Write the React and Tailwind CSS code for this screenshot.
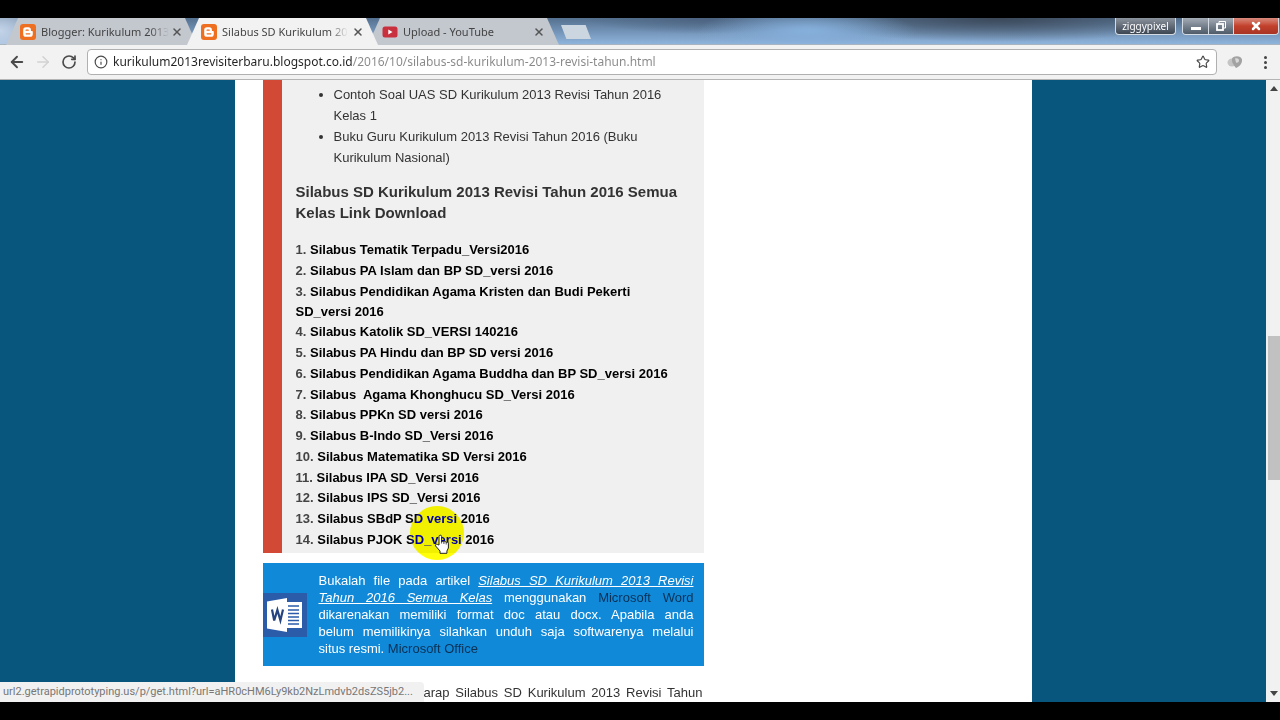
import React, { useState } from 'react'
import { ArrowLeft, ArrowRight, RotateCw, Info, Star, X } from 'lucide-react'

const tabs = [
  { id: 1, title: 'Blogger: Kurikulum 2013', icon: 'blogger' },
  { id: 2, title: 'Silabus SD Kurikulum 20', icon: 'blogger' },
  { id: 3, title: 'Upload - YouTube', icon: 'youtube' },
]

const downloads = [
  'Silabus Tematik Terpadu_Versi2016',
  'Silabus PA Islam dan BP SD_versi 2016',
  'Silabus Pendidikan Agama Kristen dan Budi Pekerti SD_versi\u00a02016',
  'Silabus Katolik SD_VERSI 140216',
  'Silabus PA Hindu dan BP SD versi 2016',
  'Silabus Pendidikan Agama Buddha dan BP SD_versi 2016',
  'Silabus\u00a0 Agama Khonghucu SD_Versi 2016',
  'Silabus PPKn SD versi 2016',
  'Silabus B-Indo SD_Versi 2016',
  'Silabus Matematika SD Versi 2016',
  'Silabus IPA SD_Versi 2016',
  'Silabus IPS SD_Versi 2016',
  'Silabus SBdP SD versi 2016',
  'Silabus PJOK SD_versi 2016',
]

const BloggerIcon = () => (
  <svg viewBox="0 0 16 16" className="h-4 w-4 shrink-0">
    <rect width="16" height="16" rx="3" fill="#ee6f20" />
    <path
      d="M6 3.2h2.4a2.5 2.5 0 0 1 2.5 2.5v.7c0 .5.3.7.8.7.7 0 1.1.3 1.1 1v1.8a2.9 2.9 0 0 1-2.9 2.9H6a2.8 2.8 0 0 1-2.8-2.9V6A2.8 2.8 0 0 1 6 3.2z"
      fill="#fff"
    />
    <path d="M6.1 6.2h2.1M6.1 9.8h3.7" stroke="#ee6f20" strokeWidth="1.3" strokeLinecap="round" />
  </svg>
)

const YoutubeIcon = () => (
  <svg viewBox="0 0 16 16" className="h-4 w-4 shrink-0">
    <rect x="0.5" y="2.5" width="15" height="11" rx="2.5" fill="#c9303e" />
    <path d="M6.3 5.6v4.8l4.2-2.4z" fill="#fff" />
  </svg>
)

const WordIcon = () => (
  <svg viewBox="0 0 44 44" className="h-11 w-11 shrink-0">
    <rect width="44" height="44" fill="#2a5caa" />
    <rect x="23" y="9" width="16" height="26" fill="#fff" />
    <path d="M25 13h11M25 17h11M25 20.500h11M25 24h11M25 27.500h11M25 31h11" stroke="#2a5caa" strokeWidth="1.5" />
    <path d="M4 8.500L24 5v34L4 35.500z" fill="#fff" />
    <path d="M9 16.500l2.200 11 3.200-10.500L17.400 27.500 20 16.500" fill="none" stroke="#24437f" strokeWidth="2.200" />
  </svg>
)

const HandCursor = () => (
  <svg viewBox="0 0 16 20" className="absolute top-7 left-6 h-5 w-4">
    <path
      d="M5 11V2.500a1.300 1.300 0 0 1 2.600 0V8a1.200 1.200 0 0 1 2.300.3 1.200 1.200 0 0 1 2.300.4 1.200 1.200 0 0 1 2.200.7V14l-1.500 3v2.300H6V17L1.600 12c-.8-1.200.7-2.400 1.800-1.500z"
      fill="#fff"
      stroke="#222"
      strokeWidth="1"
    />
    <path d="M7.600 8v1.500M9.900 8.500v1.500M12.200 9v1.500" stroke="#222" strokeWidth="0.8" />
  </svg>
)

const Tab = ({ tab, active, onSelect }) => (
  <div
    className={`relative -mr-2.5 flex h-[27px] w-[191px] items-center px-3.5 pt-px [clip-path:polygon(12px_0,calc(100%-12px)_0,100%_100%,0_100%)] ${
      active ? 'z-10 bg-[#f2f2f2]' : 'bg-[#c3c7ce]'
    }`}
  >
    <button
      onClick={() => onSelect(tab.id)}
      className="flex min-w-0 flex-1 items-center gap-[5px] text-left text-[11px] text-[#444]"
    >
      {tab.icon === 'youtube' ? <YoutubeIcon /> : <BloggerIcon />}
      <span className="flex-1 whitespace-nowrap [mask-image:linear-gradient(to_right,black_85%,transparent)]">
        {tab.title}
      </span>
    </button>
    <button aria-label={`Close ${tab.title}`} className="ml-2 text-[#555]">
      <X className="h-3 w-3" strokeWidth={3} />
    </button>
  </div>
)

const TabStrip = () => {
  const [activeTab, setActiveTab] = useState(2)

  return (
    <div className="flex h-[27px] items-start border-b border-[#a8b4c0] bg-[radial-gradient(ellipse_110px_22px_at_63%_50%,#86b0dc,transparent),radial-gradient(ellipse_200px_24px_at_78%_0%,#3b4859,transparent),radial-gradient(ellipse_120px_16px_at_55%_0%,#4c6380,transparent),radial-gradient(ellipse_60px_40px_at_0%_50%,#c4d4e8,transparent),linear-gradient(to_bottom,#54708f,#8fb4dc)]">
      <div className="flex h-full flex-1 pl-1.5">
        {tabs.map((tab) => (
          <Tab key={tab.id} tab={tab} active={tab.id === activeTab} onSelect={setActiveTab} />
        ))}
        <button
          aria-label="New tab"
          className="mt-[7px] ml-3 h-3.5 w-[30px] bg-[#ccd6e0] [clip-path:polygon(0_0,82%_0,100%_100%,18%_100%)]"
        />
      </div>
      <div className="flex gap-1.5 pr-px">
        <button className="h-[17px] w-[61px] rounded-b border border-t-0 border-[#d5dbe2] bg-linear-to-b from-[#8b939d] to-[#3d4754] text-[10px] leading-4 text-white">
          ziggypixel
        </button>
        <div className="flex h-[17px] overflow-hidden rounded-b border border-t-0 border-[#d5dbe2]">
          <button
            aria-label="Minimize"
            className="flex w-[26px] items-center justify-center border-r border-[#d5dbe2] bg-linear-to-b from-[#a3abb5] to-[#4f5b69]"
          >
            <span className="mt-1 h-[3px] w-2.5 bg-white" />
          </button>
          <button
            aria-label="Restore"
            className="flex w-[25px] items-center justify-center border-r border-[#d5dbe2] bg-linear-to-b from-[#a3abb5] to-[#4f5b69]"
          >
            <svg viewBox="0 0 10 10" className="h-2.5 w-2.5" fill="none" stroke="#fff">
              <path d="M3 2V.5h6.500V7H8" />
              <rect x="1" y="3" width="6" height="6" strokeWidth="1.800" />
            </svg>
          </button>
          <button
            aria-label="Close"
            className="flex w-11 items-center justify-center bg-linear-to-b from-[#d98a7c] via-[#c2402b] to-[#a83424] text-white"
          >
            <X className="h-3 w-3" strokeWidth={5} />
          </button>
        </div>
      </div>
    </div>
  )
}

const Toolbar = () => {
  const [url, setUrl] = useState(
    'kurikulum2013revisiterbaru.blogspot.co.id/2016/10/silabus-sd-kurikulum-2013-revisi-tahun.html'
  )

  return (
    <div className="flex h-[35px] items-center border-b border-[#b4b4b4] bg-[#f2f2f2] pr-[11px] pl-2 text-[#4a4a4a]">
      <button aria-label="Back">
        <ArrowLeft className="h-[18px] w-[18px]" strokeWidth={2.5} />
      </button>
      <button aria-label="Forward" className="ml-2 text-[#d2d2d2]" disabled>
        <ArrowRight className="h-[18px] w-[18px]" />
      </button>
      <button aria-label="Reload" className="ml-[9px]">
        <RotateCw className="h-4 w-4" strokeWidth={2.5} />
      </button>
      <label className="ml-2.5 flex h-[26px] flex-1 items-center rounded-sm border border-[#b0b0b0] bg-white pr-1.5 pl-1.5">
        <Info className="h-3.5 w-3.5 shrink-0" />
        <input
          type="text"
          aria-label="Address"
          value={url}
          onChange={(e) => setUrl(e.target.value)}
          className="ml-[5px] flex-1 bg-linear-to-r from-[#222] from-[240px] to-[#888] to-[240px] bg-clip-text text-xs text-transparent outline-none"
        />
        <button aria-label="Bookmark">
          <Star className="h-3.5 w-3.5" strokeWidth={2} />
        </button>
      </label>
      <button aria-label="Extension" className="ml-2.5">
        <svg viewBox="0 0 16 14" className="h-3.5 w-4">
          <ellipse cx="5" cy="7.500" rx="4.500" ry="4" fill="#c4c4c4" />
          <path d="M5 3.500C7 .5 14 .5 15 4.500c.5 4-3 7.500-6 8.500-2-3-4.500-5-4-9.500z" fill="#a2a2a2" />
          <path d="M8 3.500c2-.8 4 0 4 2s-2 2.500-3 2z" fill="#d8d8d8" />
        </svg>
      </button>
      <button aria-label="Menu" className="ml-[18px] flex w-2 flex-col items-center gap-[2px]">
        <span className="h-[3px] w-[3px] rounded-full bg-[#444]" />
        <span className="h-[3px] w-[3px] rounded-full bg-[#444]" />
        <span className="h-[3px] w-[3px] rounded-full bg-[#444]" />
      </button>
    </div>
  )
}

const Scrollbar = () => (
  <div className="flex w-3.5 flex-col items-center bg-[#f1f1f1]">
    <span className="pt-1.5 pl-0.5">
      <svg viewBox="0 0 8 5" className="h-[5px] w-2">
        <path d="M0 5L4 0l4 5z" fill="#444" />
      </svg>
    </span>
    <div className="flex-[244]" />
    <div className="h-36 w-full border-l-2 border-[#f1f1f1] bg-[#c1c1c1]" />
    <div className="flex-[210]" />
    <span className="pb-1.5 pl-0.5">
      <svg viewBox="0 0 8 5" className="h-[5px] w-2">
        <path d="M0 0h8L4 5z" fill="#444" />
      </svg>
    </span>
  </div>
)

const Article = () => (
  <article className="w-[441px] font-['Liberation_Sans',Arial,sans-serif] text-[13px] text-[#333]">
    <section className="relative border-l-[19px] border-[#d24a36] bg-[#f0f0f0] pt-1 pr-3 pb-[3px] pl-3.5">
      <ul className="list-disc pr-3 pl-[38px] leading-[21px]">
        <li>Contoh Soal UAS SD Kurikulum 2013 Revisi Tahun 2016 Kelas 1</li>
        <li>Buku Guru Kurikulum 2013 Revisi Tahun 2016 (Buku Kurikulum Nasional)</li>
      </ul>
      <h3 className="mt-[13px] text-[15px] leading-[21px] font-bold">
        Silabus SD Kurikulum 2013 Revisi Tahun 2016 Semua Kelas Link Download
      </h3>
      <ol className="mt-[17px] flex min-h-[310px] flex-col justify-between leading-5 font-bold text-[#444]">
        {downloads.map((name, index) => (
          <li key={name}>
            {index + 1}.{' '}
            <a href="#download" className="text-black">
              {name}
            </a>
          </li>
        ))}
      </ol>
      {/* Click highlight and pointer */}
      <div className="absolute -bottom-[7px] left-32 h-[54px] w-[54px] rounded-full bg-[#0000f0] mix-blend-difference" />
      <div className="absolute -bottom-[7px] left-32 h-[54px] w-[54px] rounded-full bg-[#ffffb0] mix-blend-multiply" />
      <div className="absolute -bottom-[7px] left-32 h-[54px] w-[54px]">
        <HandCursor />
      </div>
    </section>

    <section className="mt-2.5 flex items-center gap-3 bg-[#1189d9] py-[9px] pr-2.5 text-white">
      <WordIcon />
      <p className="flex-1 text-justify leading-[17px]">
        Bukalah file pada artikel{' '}
        <em className="underline">Silabus SD Kurikulum 2013 Revisi Tahun 2016 Semua Kelas</em> menggunakan{' '}
        <a href="#word" className="text-[#0b3154]">Microsoft Word</a> dikarenakan memiliki format doc atau docx.
        Apabila anda belum&nbsp;memilikinya silahkan unduh saja softwarenya melalui situs&nbsp;resmi.{' '}
        <a href="#office" className="text-[#0b3154]">Microsoft Office</a>
      </p>
    </section>

    <p className="mt-4 ml-auto w-[280px] pr-px text-justify leading-[21px] [text-align-last:justify]">
      arap Silabus SD Kurikulum 2013 Revisi Tahun
    </p>
  </article>
)

const App = () => {
  return (
    <div className="flex h-screen flex-col overflow-hidden border-y-[18px] border-black bg-white font-['Noto_Sans','Open_Sans',sans-serif]">
      <TabStrip />
      <Toolbar />
      <div className="relative flex min-h-0 flex-1">
        <main className="flex-1 overflow-hidden bg-[#08567d]">
          <div className="mx-auto min-h-full max-w-[797px] bg-white pl-7">
            <Article />
          </div>
        </main>
        <Scrollbar />
        <div className="absolute bottom-0 left-0 h-5 min-w-[424px] rounded-tr bg-[#f1f1f1] pr-1 pl-[3px] font-['Roboto',sans-serif] text-[11px] leading-5 whitespace-nowrap text-[#777]">
          url2.getrapidprototyping.us/p/get.html?url=aHR0cHM6Ly9kb2NzLmdvb2dsZS5jb2...
        </div>
      </div>
    </div>
  )
}

export default App
